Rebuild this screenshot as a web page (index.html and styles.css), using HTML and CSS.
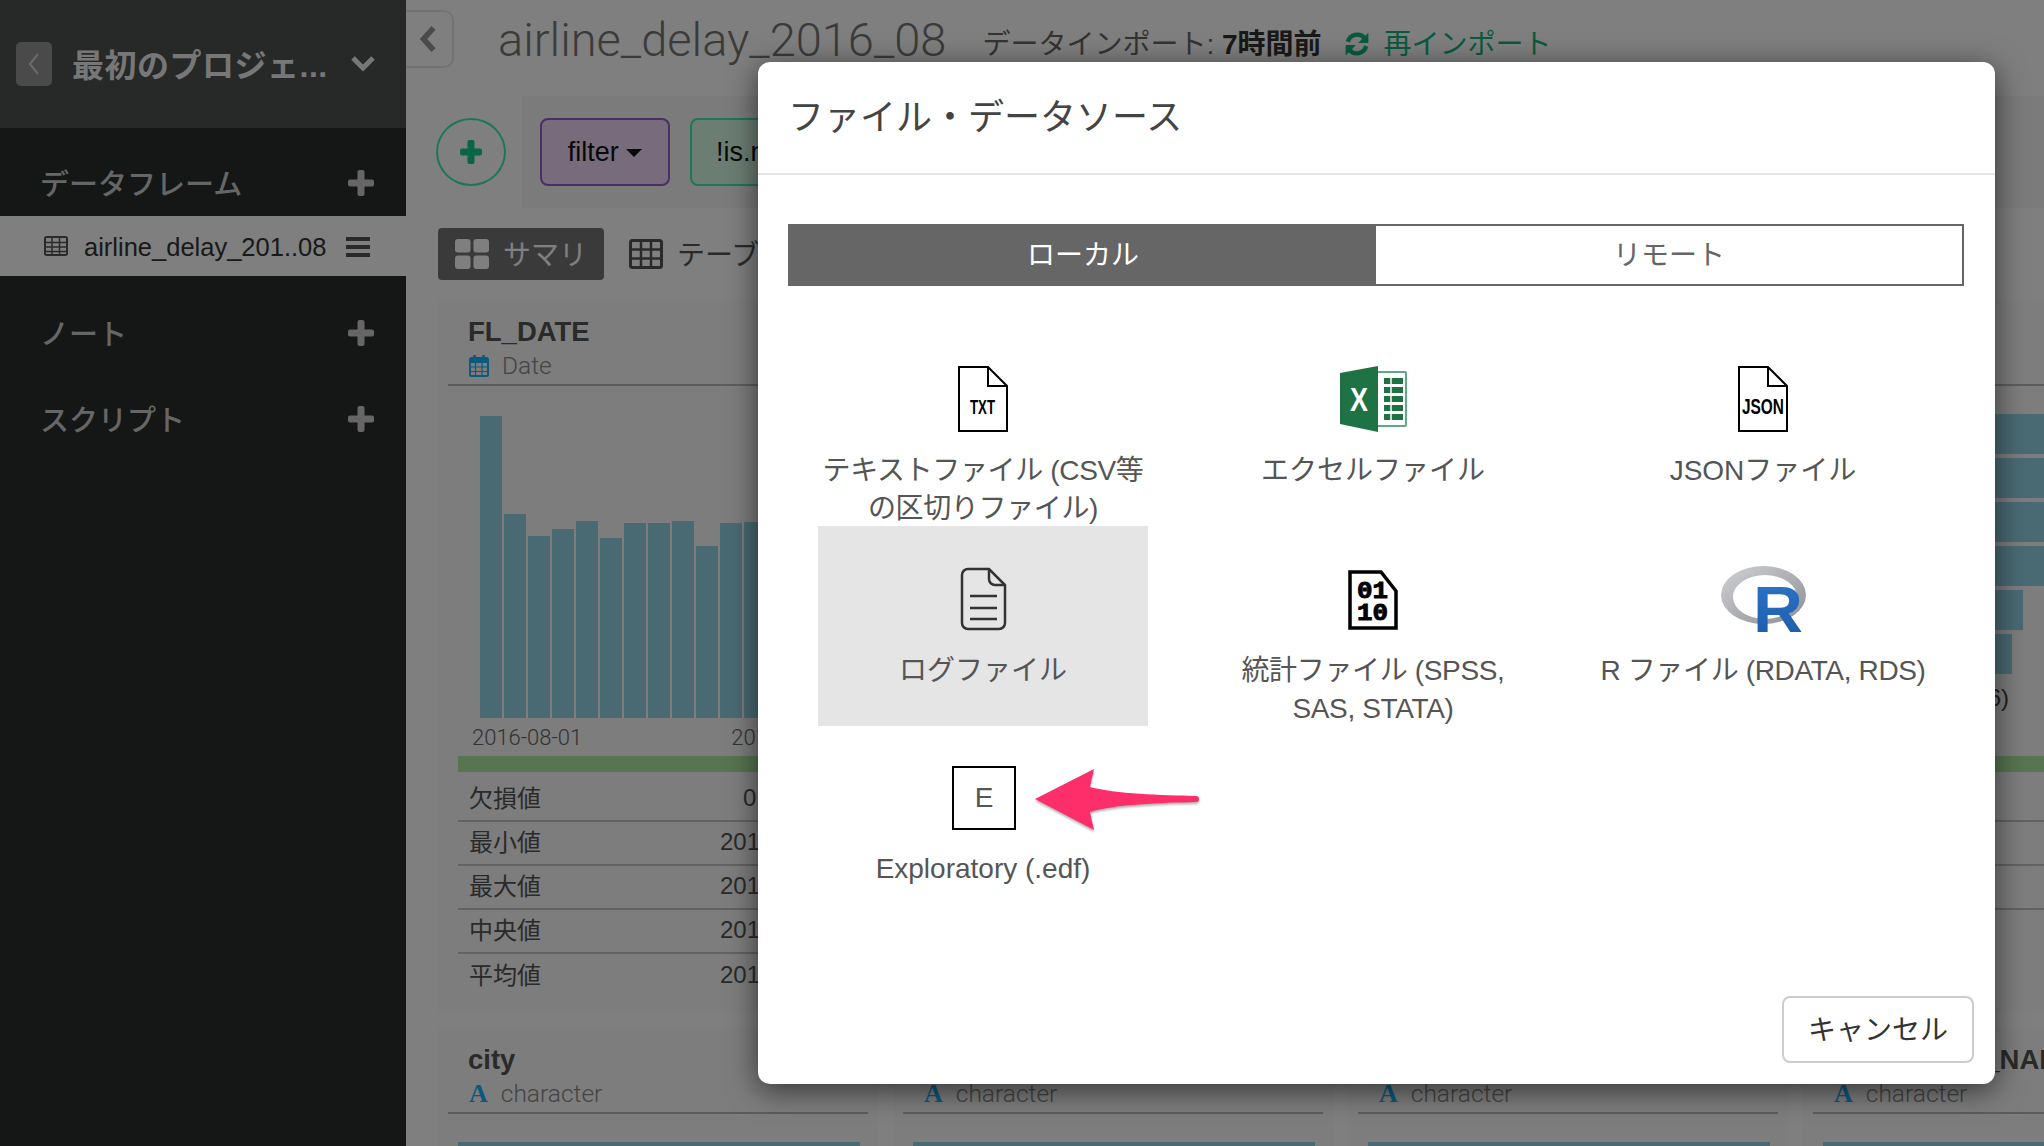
FILE: index.html
```html
<!DOCTYPE html>
<html lang="ja">
<head>
<meta charset="utf-8">
<title>ファイル・データソース</title>
<link rel="stylesheet" href="styles.css">
</head>
<body>
<div class="app">
  <aside class="sidebar">
    <header class="project">
      <button class="project-back"><svg width="14" height="26" viewBox="0 0 14 26"><path d="M11 3 3 13l8 10" fill="none" stroke="#ddd" stroke-width="2"/></svg></button>
      <span class="project-name">最初のプロジェ...</span>
      <svg class="project-chevron" width="26" height="18" viewBox="0 0 26 18"><path d="M3 3l10 10L23 3" fill="none" stroke="#eee" stroke-width="5"/></svg>
    </header>
    <nav class="nav">
      <section class="nav-section">
        <div class="nav-title"><span>データフレーム</span><svg class="plus" width="26" height="26" viewBox="0 0 26 26"><rect x="9.500" y="0" width="7" height="26" rx="2"/><rect x="0" y="9.500" width="26" height="7" rx="2"/></svg></div>
        <div class="nav-item">
          <svg class="nav-grid" width="24" height="20" viewBox="0 0 24 20"><rect x="1" y="1" width="22" height="18" rx="1.500" fill="none" stroke="#555" stroke-width="2"/><path d="M1 6.500h22M1 11h22M1 15.500h22M8 1v18M15.500 1v18" stroke="#555" stroke-width="1.500"/></svg>
          <span class="nav-item-text">airline_delay_201..08</span>
          <svg class="nav-menu" width="24" height="20" viewBox="0 0 24 20"><rect width="24" height="4" fill="#555"/><rect y="8" width="24" height="4" fill="#555"/><rect y="16" width="24" height="4" fill="#555"/></svg>
        </div>
      </section>
      <section class="nav-section">
        <div class="nav-title"><span>ノート</span><svg class="plus" width="26" height="26" viewBox="0 0 26 26"><rect x="9.500" y="0" width="7" height="26" rx="2"/><rect x="0" y="9.500" width="26" height="7" rx="2"/></svg></div>
      </section>
      <section class="nav-section">
        <div class="nav-title"><span>スクリプト</span><svg class="plus" width="26" height="26" viewBox="0 0 26 26"><rect x="9.500" y="0" width="7" height="26" rx="2"/><rect x="0" y="9.500" width="26" height="7" rx="2"/></svg></div>
      </section>
    </nav>
  </aside>

  <main class="main">
    <header class="topbar">
      <button class="collapse"><svg width="20" height="28" viewBox="0 0 18 24"><path d="M14 2 5 12l9 10" fill="none" stroke="#949494" stroke-width="5"/></svg></button>
      <h1 class="frame-name">airline_delay_2016_08</h1>
      <span class="import-info">データインポート: <b>7時間前</b></span>
      <svg class="refresh" width="26" height="26" viewBox="0 0 24 24"><path d="M3.500 10A9 9 0 0 1 19 6.500" fill="none" stroke="#12b47c" stroke-width="4"/><path d="M22.500 1.500V11h-9.500z" fill="#12b47c"/><path d="M20.500 14A9 9 0 0 1 5 17.500" fill="none" stroke="#12b47c" stroke-width="4"/><path d="M1.500 22.500V13H11z" fill="#12b47c"/></svg>
      <span class="reimport">再インポート</span>
    </header>

    <div class="toolbar">
      <button class="add-step"><svg width="22" height="24" viewBox="0 0 22 24"><rect x="7.500" y="0" width="7" height="24" rx="2" fill="#14c88c"/><rect x="0" y="8.500" width="22" height="7" rx="2" fill="#14c88c"/></svg></button>
      <div class="steps">
        <button class="step step-filter">filter <i class="caret"></i></button>
        <button class="step step-cond">!is.na(FL_DATE)</button>
      </div>
    </div>

    <div class="view-tabs">
      <button class="view-tab view-tab-on">
        <svg width="34" height="30" viewBox="0 0 34 30"><rect width="15.500" height="13.500" rx="3" fill="#fff"/><rect x="18.500" width="15.500" height="13.500" rx="3" fill="#fff"/><rect y="16.500" width="15.500" height="13.500" rx="3" fill="#fff"/><rect x="18.500" y="16.500" width="15.500" height="13.500" rx="3" fill="#fff"/></svg>
        <span class="view-tab-text">サマリ</span>
      </button>
      <button class="view-tab">
        <svg width="34" height="30" viewBox="0 0 34 30"><rect x="1.500" y="1.500" width="31" height="27" rx="2" fill="none" stroke="#555" stroke-width="3"/><path d="M1.500 10.500h31M1.500 19.500h31M12 1.500v27M22 1.500v27" stroke="#555" stroke-width="2.500"/></svg>
        <span class="view-tab-text">テーブル</span>
      </button>
    </div>

    <div class="cards">
      <article class="card">
        <div class="card-head">
          <h2 class="card-title">FL_DATE</h2>
          <div class="card-type">
            <svg class="cal" width="20" height="22" viewBox="0 0 20 22"><rect x="1" y="3" width="18" height="18" rx="1.500" fill="none" stroke="#14b4ff" stroke-width="2"/><rect x="1" y="3" width="18" height="5" fill="#14b4ff"/><path d="M5.500 0v5M14.500 0v5" stroke="#14b4ff" stroke-width="2.500"/><path d="M1 12h18M1 16.500h18M6.500 8v13M13 8v13" stroke="#14b4ff" stroke-width="1.200"/></svg>
            Date
          </div>
        </div>
        <div class="histogram">
          <i class="bar" style="height:302px"></i><i class="bar" style="height:204px"></i><i class="bar" style="height:182px"></i><i class="bar" style="height:189px"></i><i class="bar" style="height:197px"></i><i class="bar" style="height:180px"></i><i class="bar" style="height:195px"></i><i class="bar" style="height:195px"></i><i class="bar" style="height:197px"></i><i class="bar" style="height:172px"></i><i class="bar" style="height:195px"></i><i class="bar" style="height:196px"></i>
        </div>
        <div class="axis"><span>2016-08-01</span><span class="axis-end">2016-08-31</span></div>
        <div class="stripe"></div>
        <div class="stats">
          <div class="stat"><span class="stat-key">欠損値</span><span class="stat-val stat-zero">0</span></div>
          <div class="stat"><span class="stat-key">最小値</span><span class="stat-val">2016-08-01</span></div>
          <div class="stat"><span class="stat-key">最大値</span><span class="stat-val">2016-08-31</span></div>
          <div class="stat"><span class="stat-key">中央値</span><span class="stat-val">2016-08-16</span></div>
          <div class="stat"><span class="stat-key">平均値</span><span class="stat-val">2016-08-16</span></div>
        </div>
      </article>
      <article class="card"></article>
      <article class="card"></article>
      <article class="card">
        <div class="card-head">
          <h2 class="card-title">CARRIER</h2>
          <div class="card-type"><span class="type-a">A</span> character</div>
        </div>
        <div class="hbars">
          <i class="hbar" style="width:300px"></i><i class="hbar" style="width:300px"></i><i class="hbar" style="width:300px"></i><i class="hbar" style="width:300px"></i><i class="hbar" style="width:200px"></i><i class="hbar" style="width:189px"></i>
        </div>
        <div class="hbars-label">Other (6)</div>
        <div class="stripe stripe-right"></div>
        <div class="stats">
          <div class="stat"><span class="stat-key">欠損値</span></div>
          <div class="stat"><span class="stat-key">ユニーク</span></div>
          <div class="stat"><span class="stat-key">最頻値</span></div>
          <div class="stat"><span class="stat-key">&nbsp;</span></div>
        </div>
      </article>

      <article class="card">
        <div class="card-head"><h2 class="card-title">city</h2><div class="card-type"><span class="type-a">A</span> character</div></div>
        <div class="teal"></div>
      </article>
      <article class="card">
        <div class="card-head"><h2 class="card-title">state</h2><div class="card-type"><span class="type-a">A</span> character</div></div>
        <div class="teal"></div>
      </article>
      <article class="card">
        <div class="card-head"><h2 class="card-title">name</h2><div class="card-type"><span class="type-a">A</span> character</div></div>
        <div class="teal"></div>
      </article>
      <article class="card">
        <div class="card-head"><h2 class="card-title">DEST_CITY_NAME</h2><div class="card-type"><span class="type-a">A</span> character</div></div>
        <div class="teal"></div>
      </article>
    </div>
  </main>
</div>

<div class="backdrop"></div>

<div class="modal">
  <header class="modal-head"><h3 class="modal-title">ファイル・データソース</h3></header>
  <div class="modal-body">
    <div class="source-tabs">
      <button class="source-tab source-tab-on">ローカル</button>
      <button class="source-tab">リモート</button>
    </div>
    <div class="sources">
      <div class="source">
        <svg class="source-icon" width="50" height="66" viewBox="0 0 50 66"><path d="M1 1h29l19 19v45H1z" fill="#fff" stroke="#000" stroke-width="2"/><path d="M30 1v19h19" fill="none" stroke="#000" stroke-width="2"/><text x="12" y="48" font-family="Liberation Sans" font-weight="700" font-size="21" textLength="25" lengthAdjust="spacingAndGlyphs">TXT</text></svg>
        <span class="source-label source-label-tight">テキストファイル (CSV等<br>の区切りファイル)</span>
      </div>
      <div class="source">
        <svg class="source-icon" width="67" height="66" viewBox="0 0 67 66"><rect x="36" y="6" width="30" height="54" rx="1" fill="#fff" stroke="#5fa883" stroke-width="2"/><path d="M44 12h19v6H44zM44 21h19v6H44zM44 30h19v6H44zM44 39h19v6H44zM44 48h19v6H44z" fill="#1f7244"/><path d="M51 11v44" stroke="#fff" stroke-width="1.500"/><path d="M0 7 38 0v66L0 58z" fill="#1f7244"/><text x="10" y="45" fill="#fff" font-family="Liberation Sans" font-weight="700" font-size="34" textLength="18" lengthAdjust="spacingAndGlyphs">X</text></svg>
        <span class="source-label">エクセルファイル</span>
      </div>
      <div class="source">
        <svg class="source-icon" width="50" height="66" viewBox="0 0 50 66"><path d="M1 1h29l19 19v45H1z" fill="#fff" stroke="#000" stroke-width="2"/><path d="M30 1v19h19" fill="none" stroke="#000" stroke-width="2"/><text x="4" y="48" font-family="Liberation Sans" font-weight="700" font-size="22" textLength="42" lengthAdjust="spacingAndGlyphs">JSON</text></svg>
        <span class="source-label">JSONファイル</span>
      </div>
      <div class="source source-on">
        <svg class="source-icon" width="47" height="66" viewBox="0 0 47 66"><path d="M8 3h21l16 16v38a6 6 0 0 1-6 6H8a6 6 0 0 1-6-6V9a6 6 0 0 1 6-6z" fill="none" stroke="#333" stroke-width="2.500"/><path d="M29 3v10a6 6 0 0 0 6 6h10" fill="none" stroke="#333" stroke-width="2.500"/><path d="M10 30h27M10 42h27M10 53h27" stroke="#333" stroke-width="2.500"/></svg>
        <span class="source-label">ログファイル</span>
      </div>
      <div class="source">
        <svg class="source-icon" width="50" height="66" viewBox="0 0 50 66"><path d="M2 6h31l15 19v37H2z" fill="#fff" stroke="#000" stroke-width="3.500"/><text x="9" y="32" stroke="#000" stroke-width=".9" font-family="Liberation Mono" font-weight="700" font-size="23" textLength="31" lengthAdjust="spacingAndGlyphs">01</text><text x="9" y="54" stroke="#000" stroke-width=".9" font-family="Liberation Mono" font-weight="700" font-size="23" textLength="31" lengthAdjust="spacingAndGlyphs">10</text></svg>
        <span class="source-label source-label-tight">統計ファイル (SPSS,<br>SAS, STATA)</span>
      </div>
      <div class="source">
        <svg class="source-icon" width="85" height="66" viewBox="0 0 85 66"><defs><linearGradient id="ring" x1="0" y1="0" x2="1" y2="1"><stop offset="0" stop-color="#cfd1d5"/><stop offset="1" stop-color="#8d8f93"/></linearGradient><linearGradient id="rblue" x1="0" y1="0" x2="0" y2="1"><stop offset="0" stop-color="#2f75cb"/><stop offset="1" stop-color="#1a5aa8"/></linearGradient></defs><path fill-rule="evenodd" d="M0 29a42.500 29 0 1 0 85 0a42.500 29 0 1 0-85 0zM12 31a32 22 0 1 0 64 0a32 22 0 1 0-64 0z" fill="url(#ring)"/><text x="32" y="66" fill="url(#rblue)" font-family="Liberation Sans" font-weight="700" font-size="65" textLength="50" lengthAdjust="spacingAndGlyphs">R</text></svg>
        <span class="source-label source-label-tight">R ファイル (RDATA, RDS)</span>
      </div>
      <div class="source">
        <span class="edf-icon">E</span>
        <span class="source-label">Exploratory (.edf)</span>
      </div>
    </div>
  </div>
  <footer class="modal-foot"><button class="cancel">キャンセル</button></footer>
</div>

<svg class="arrow" width="178" height="76" viewBox="0 0 178 76"><path d="M4 34 63 4 59 22C85 29 130 30 165 31a3 3 0 0 1 0 6C130 38 85 39 59 47l4 18z" fill="#fe2e6b"/></svg>
</body>
</html>
```
FILE: styles.css
```css
* { box-sizing: border-box; }
html, body { margin: 0; height: 100%; }
body {
  width: 2044px; height: 1146px; overflow: hidden; position: relative;
  font-family: "Liberation Sans", "Noto Sans CJK JP", sans-serif;
  background: #fff; color: #222;
}
button { font: inherit; padding: 0; background: none; border: 0; color: inherit; }
h1, h2, h3 { margin: 0; font-weight: 400; }

.app { display: flex; width: 2044px; height: 1146px; overflow: hidden; }

/* sidebar */
.sidebar { width: 406px; flex: none; background: #2a2c2c; color: #ccc; }
.project { height: 128px; background: #4e5050; display: flex; align-items: center; padding: 0 30px 0 16px; }
.project-back { width: 36px; height: 44px; border-radius: 5px; background: #949494; display: flex; align-items: center; justify-content: center; flex: none; }
.project-name { margin: 0 0 2px 20px; flex: 1; font-size: 32px; letter-spacing: .5px; font-weight: 700; color: #eee; white-space: nowrap; }
.nav { padding-top: 22px; display: flex; flex-direction: column; gap: 20px; }
.nav-title { height: 66px; display: flex; align-items: center; justify-content: space-between; padding: 0 32px 0 40px; font-size: 29px; color: #ccc; font-weight: 500; }
.nav-title span { margin-bottom: 2px; }
.plus { fill: #ccc; }
.nav-item { height: 60px; background: #fff; color: #444; margin-bottom: 4px; display: flex; align-items: center; padding: 0 36px 0 44px; font-size: 25.500px; }
.nav-item-text { flex: 1; margin: 2px 0 0 16px; color: #333; white-space: nowrap; }
.nav-menu { margin-top: 2px; }

/* main */
.main { width: 1638px; flex: none; background: #fff; overflow: hidden; }
.topbar { height: 96px; display: flex; align-items: flex-start; }
.collapse { width: 48px; height: 58px; margin: 10px 0 0; border: 2px solid #e4e4e4; border-left: 0; border-radius: 0 10px 10px 0; display: flex; align-items: center; justify-content: center; padding-right: 2px; flex: none; }
.frame-name { margin: 10px 0 0 44px; font-family: Roboto, "Liberation Sans", sans-serif; font-weight: 300; font-size: 47px; line-height: 60px; color: #777; white-space: nowrap; }
.import-info { margin: 26px 0 0 36px; font-size: 28px; line-height: 38px; color: #666; white-space: nowrap; }
.import-info b { color: #333; font-weight: 700; }
.refresh { margin: 31px 0 0 22px; flex: none; }
.reimport { margin: 26px 0 0 14px; font-size: 28px; line-height: 38px; color: #12b47c; white-space: nowrap; }

.toolbar { height: 112px; display: flex; }
.add-step { width: 70px; height: 68px; margin: 22px 16px 0 30px; border: 2px solid #36f0ac; border-radius: 50%; display: flex; align-items: center; justify-content: center; flex: none; }
.steps { flex: 1; background: #f6f6f6; display: flex; gap: 20px; padding: 22px 0 0 18px; }
.step { height: 68px; border-radius: 8px; border: 2px solid; font-size: 27px; color: #111; white-space: nowrap; }
.step-filter { width: 130px; background: #eed6f8; border-color: #945ecc; }
.step-cond { padding: 0 24px; background: #d8fde6; border-color: #3cf0ae; }
.caret { display: inline-block; border: 8px solid transparent; border-top: 8px solid #111; border-bottom: 0; vertical-align: middle; }

.view-tabs { height: 92px; display: flex; padding: 20px 0 0 32px; gap: 25px; }
.view-tab { height: 52px; display: flex; align-items: center; gap: 14px; font-size: 28px; color: #555; white-space: nowrap; }
.view-tab-text { margin-bottom: 2px; }
.view-tab-on { width: 166px; justify-content: center; background: #747474; color: #fff; border-radius: 4px; }

.cards { display: grid; grid-template-columns: repeat(4, 440px); grid-template-rows: 712px 200px; row-gap: 16px; column-gap: 15px; padding-left: 32px; }
.card { background: #fafafa; }
.card-head { height: 86px; margin: 0 10px; padding: 16px 0 0 21px; border-bottom: 2px solid #bbb; }
.card-title { font-size: 27.500px; line-height: 32px; font-weight: 700; color: #555; white-space: nowrap; margin-left: -1px; }
.card-type { font-family: Roboto, "Liberation Sans", sans-serif; font-weight: 300; font-size: 24.500px; line-height: 36px; color: #888; display: flex; align-items: center; gap: 13px; }
.type-a { font-family: "Liberation Serif", serif; font-weight: 700; font-size: 26px; color: #14b4ff; }
.cal { flex: none; }

.histogram { height: 332px; padding-left: 42px; display: flex; align-items: flex-end; gap: 2px; }
.bar { display: block; width: 22px; flex: none; background: #94d4e6; }
.axis { height: 38px; padding-left: 34px; display: flex; align-items: center; font-family: Roboto, "Liberation Sans", sans-serif; font-weight: 300; font-size: 22px; color: #666; white-space: nowrap; }
.axis-end { margin-left: 149px; }
.stripe { height: 16px; margin-left: 20px; background: #aeeaa0; }
.stats { margin-left: 20px; padding-top: 6px; }
.stat { height: 44px; display: flex; align-items: center; padding: 0 0 6px 11px; border-bottom: 2px solid #c4c4c4; font-size: 24px; color: #555; white-space: nowrap; }
.stat:last-child { border-bottom: 0; }
.stat-key { width: 251px; flex: none; }
.stat-val { margin-top: 3px; }
.stat-zero { margin-left: 23px; }

.hbars { height: 290px; padding: 28px 0 0 20px; display: flex; flex-direction: column; gap: 4px; }
.hbar { display: block; height: 40px; background: #94d4e6; }
.hbars-label { height: 44px; margin-bottom: 36px; padding-left: 110px; display: flex; align-items: center; font-size: 24px; color: #444; white-space: nowrap; }
.stripe-right { margin-left: 0; }

.teal { height: 40px; margin: 28px 18px 0 20px; background: #94d4e6; }

/* modal */
.backdrop { position: absolute; inset: 0; background: rgba(0, 0, 0, .5); }
.modal { position: absolute; left: 758px; top: 62px; width: 1237px; height: 1022px; background: #fff; border-radius: 12px; box-shadow: 0 6px 30px rgba(0, 0, 0, .6); display: flex; flex-direction: column; }
.modal-head { height: 113px; padding: 0 30px 7px; display: flex; align-items: center; border-bottom: 2px solid #e5e5e5; }
.modal-title { font-size: 36px; color: #444; white-space: nowrap; }
.modal-body { padding: 49px 30px 0; }
.source-tabs { display: flex; height: 62px; width: 1176px; border: 2px solid #666; }
.source-tab { flex: 1; padding-bottom: 4px; font-size: 28px; color: #666; }
.source-tab-on { background: #666; color: #fff; }
.sources { display: grid; grid-template-columns: repeat(3, 330px); column-gap: 60px; grid-auto-rows: 200px; padding: 40px 0 0 30px; }
.source { padding-top: 40px; display: flex; flex-direction: column; align-items: center; text-align: center; }
.source-on { background: #e5e5e5; }
.source-icon { height: 66px; flex: none; display: block; }
.source-label { margin-top: 20px; font-size: 28px; line-height: 38px; color: #555; white-space: nowrap; }
.source-label-tight { letter-spacing: -.35px; }
.edf-icon { width: 64px; height: 64px; flex: none; margin-left: 2px; border: 2.500px solid #000; display: flex; align-items: center; justify-content: center; font-size: 28px; color: #555; }
.modal-foot { margin-top: auto; padding: 0 21px 21px 0; display: flex; justify-content: flex-end; }
.cancel { width: 192px; height: 67px; padding-bottom: 4px; border: 2px solid #ccc; border-radius: 8px; font-size: 28px; color: #333; background: #fff; }

.arrow { position: absolute; left: 1031px; top: 765px; filter: drop-shadow(0 2px 1px rgba(0, 0, 0, .3)); }
```
